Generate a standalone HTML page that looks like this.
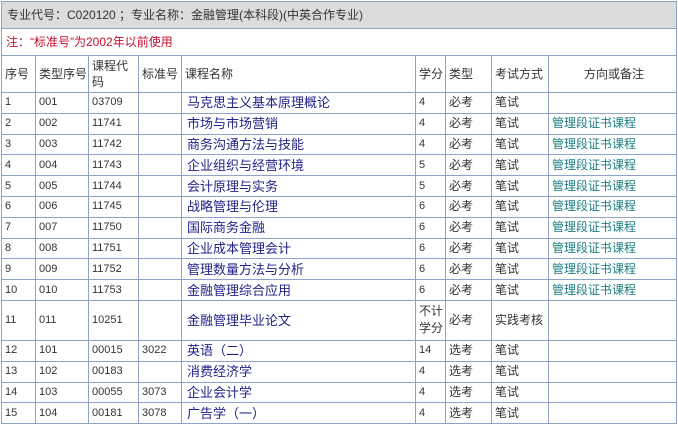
<!DOCTYPE html>
<html><head><meta charset="utf-8"><style>
body{margin:0;background:#fff;width:678px;height:425px;overflow:hidden}
table{position:absolute;left:1px;top:1px;border-collapse:collapse;table-layout:fixed;width:675px;font-family:"Liberation Sans","Noto Sans CJK SC",sans-serif;font-size:11px;color:#333}
td{border:1px solid #8fa3c9;padding:0 0 0 3px;height:19.8px;line-height:13px;overflow:hidden;white-space:nowrap}
.h td{font-size:12px}
.n{color:#22228a;font-size:13px;padding-left:5px}
.r{color:#1c7d80;font-size:12px}
.cj{font-size:12px}
</style></head><body>
<table>
<colgroup><col style="width:34px"><col style="width:53px"><col style="width:50px"><col style="width:43px"><col style="width:234px"><col style="width:30px"><col style="width:46px"><col style="width:57px"><col style="width:128px"></colgroup>
<tr><td colspan="9" style="background:#dcdcdc;height:26px;font-size:12px;padding-left:5px">专业代号：C020120 ；专业名称：金融管理(本科段)(中英合作专业)</td></tr>
<tr><td colspan="9" style="height:26px;color:#c8102e;font-size:12px;padding-left:4px">注：“标准号”为2002年以前使用</td></tr>
<tr class="h"><td style="height:36px">序号</td><td>类型序号</td><td style="white-space:normal;line-height:16px">课程代码</td><td>标准号</td><td>课程名称</td><td>学分</td><td>类型</td><td>考试方式</td><td style="text-align:center">方向或备注</td></tr>
<tr><td>1</td><td>001</td><td>03709</td><td></td><td class="n">马克思主义基本原理概论</td><td>4</td><td class="cj">必考</td><td class="cj">笔试</td><td></td></tr>
<tr><td>2</td><td>002</td><td>11741</td><td></td><td class="n">市场与市场营销</td><td>4</td><td class="cj">必考</td><td class="cj">笔试</td><td class="r">管理段证书课程</td></tr>
<tr><td>3</td><td>003</td><td>11742</td><td></td><td class="n">商务沟通方法与技能</td><td>4</td><td class="cj">必考</td><td class="cj">笔试</td><td class="r">管理段证书课程</td></tr>
<tr><td>4</td><td>004</td><td>11743</td><td></td><td class="n">企业组织与经营环境</td><td>5</td><td class="cj">必考</td><td class="cj">笔试</td><td class="r">管理段证书课程</td></tr>
<tr><td>5</td><td>005</td><td>11744</td><td></td><td class="n">会计原理与实务</td><td>5</td><td class="cj">必考</td><td class="cj">笔试</td><td class="r">管理段证书课程</td></tr>
<tr><td>6</td><td>006</td><td>11745</td><td></td><td class="n">战略管理与伦理</td><td>6</td><td class="cj">必考</td><td class="cj">笔试</td><td class="r">管理段证书课程</td></tr>
<tr><td>7</td><td>007</td><td>11750</td><td></td><td class="n">国际商务金融</td><td>6</td><td class="cj">必考</td><td class="cj">笔试</td><td class="r">管理段证书课程</td></tr>
<tr><td>8</td><td>008</td><td>11751</td><td></td><td class="n">企业成本管理会计</td><td>6</td><td class="cj">必考</td><td class="cj">笔试</td><td class="r">管理段证书课程</td></tr>
<tr><td>9</td><td>009</td><td>11752</td><td></td><td class="n">管理数量方法与分析</td><td>6</td><td class="cj">必考</td><td class="cj">笔试</td><td class="r">管理段证书课程</td></tr>
<tr><td>10</td><td>010</td><td>11753</td><td></td><td class="n">金融管理综合应用</td><td>6</td><td class="cj">必考</td><td class="cj">笔试</td><td class="r">管理段证书课程</td></tr>
<tr><td style="height:39px">11</td><td>011</td><td>10251</td><td></td><td class="n">金融管理毕业论文</td><td class="cj" style="white-space:normal;line-height:17px">不计学分</td><td class="cj">必考</td><td class="cj">实践考核</td><td></td></tr>
<tr><td>12</td><td>101</td><td>00015</td><td>3022</td><td class="n">英语（二）</td><td>14</td><td class="cj">选考</td><td class="cj">笔试</td><td></td></tr>
<tr><td>13</td><td>102</td><td>00183</td><td></td><td class="n">消费经济学</td><td>4</td><td class="cj">选考</td><td class="cj">笔试</td><td></td></tr>
<tr><td>14</td><td>103</td><td>00055</td><td>3073</td><td class="n">企业会计学</td><td>4</td><td class="cj">选考</td><td class="cj">笔试</td><td></td></tr>
<tr><td>15</td><td>104</td><td>00181</td><td>3078</td><td class="n">广告学（一）</td><td>4</td><td class="cj">选考</td><td class="cj">笔试</td><td></td></tr>
</table>
</body></html>
